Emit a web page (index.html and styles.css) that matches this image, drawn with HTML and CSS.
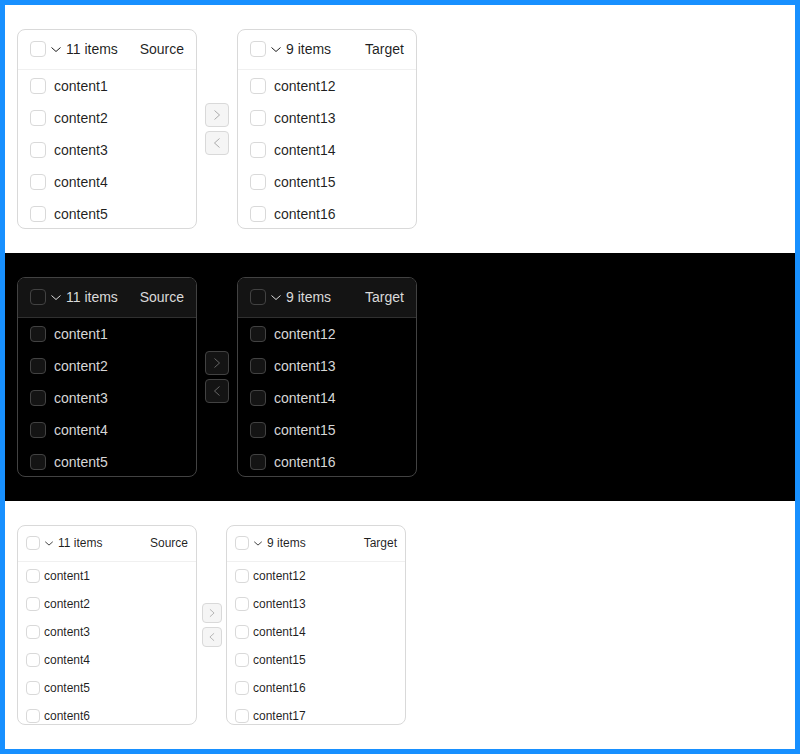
FILE: index.html
```html
<!DOCTYPE html>
<html lang="en">
<head>
<meta charset="utf-8">
<title>Transfer</title>
<link rel="stylesheet" href="styles.css">
</head>
<body>
<div class="frame">
  <section class="demo light">
    <div class="transfer">
      <div class="list">
        <div class="list-header">
          <span class="cb"></span>
          <svg class="down" viewBox="0 0 12 12"><polyline points="1.5,4.5 6,8.5 10.5,4.5"/></svg>
          <span class="count">11 items</span>
          <span class="title">Source</span>
        </div>
        <ul class="list-body">
          <li class="item"><span class="cb"></span><span>content1</span></li>
          <li class="item"><span class="cb"></span><span>content2</span></li>
          <li class="item"><span class="cb"></span><span>content3</span></li>
          <li class="item"><span class="cb"></span><span>content4</span></li>
          <li class="item"><span class="cb"></span><span>content5</span></li>
        </ul>
      </div>
      <div class="ops">
        <button class="op" type="button"><svg class="arrow" viewBox="0 0 12 12"><polyline points="3.5,1.5 8.5,6 3.5,10.5"/></svg></button>
        <button class="op" type="button"><svg class="arrow" viewBox="0 0 12 12"><polyline points="8.5,1.5 3.5,6 8.5,10.5"/></svg></button>
      </div>
      <div class="list">
        <div class="list-header">
          <span class="cb"></span>
          <svg class="down" viewBox="0 0 12 12"><polyline points="1.5,4.5 6,8.5 10.5,4.5"/></svg>
          <span class="count">9 items</span>
          <span class="title">Target</span>
        </div>
        <ul class="list-body">
          <li class="item"><span class="cb"></span><span>content12</span></li>
          <li class="item"><span class="cb"></span><span>content13</span></li>
          <li class="item"><span class="cb"></span><span>content14</span></li>
          <li class="item"><span class="cb"></span><span>content15</span></li>
          <li class="item"><span class="cb"></span><span>content16</span></li>
        </ul>
      </div>
    </div>
  </section>

  <section class="demo dark">
    <div class="transfer">
      <div class="list">
        <div class="list-header">
          <span class="cb"></span>
          <svg class="down" viewBox="0 0 12 12"><polyline points="1.5,4.5 6,8.5 10.5,4.5"/></svg>
          <span class="count">11 items</span>
          <span class="title">Source</span>
        </div>
        <ul class="list-body">
          <li class="item"><span class="cb"></span><span>content1</span></li>
          <li class="item"><span class="cb"></span><span>content2</span></li>
          <li class="item"><span class="cb"></span><span>content3</span></li>
          <li class="item"><span class="cb"></span><span>content4</span></li>
          <li class="item"><span class="cb"></span><span>content5</span></li>
        </ul>
      </div>
      <div class="ops">
        <button class="op" type="button"><svg class="arrow" viewBox="0 0 12 12"><polyline points="3.5,1.5 8.5,6 3.5,10.5"/></svg></button>
        <button class="op" type="button"><svg class="arrow" viewBox="0 0 12 12"><polyline points="8.5,1.5 3.5,6 8.5,10.5"/></svg></button>
      </div>
      <div class="list">
        <div class="list-header">
          <span class="cb"></span>
          <svg class="down" viewBox="0 0 12 12"><polyline points="1.5,4.5 6,8.5 10.5,4.5"/></svg>
          <span class="count">9 items</span>
          <span class="title">Target</span>
        </div>
        <ul class="list-body">
          <li class="item"><span class="cb"></span><span>content12</span></li>
          <li class="item"><span class="cb"></span><span>content13</span></li>
          <li class="item"><span class="cb"></span><span>content14</span></li>
          <li class="item"><span class="cb"></span><span>content15</span></li>
          <li class="item"><span class="cb"></span><span>content16</span></li>
        </ul>
      </div>
    </div>
  </section>

  <section class="demo light sm">
    <div class="transfer">
      <div class="list">
        <div class="list-header">
          <span class="cb"></span>
          <svg class="down" viewBox="0 0 12 12"><polyline points="1.5,4.5 6,8.5 10.5,4.5"/></svg>
          <span class="count">11 items</span>
          <span class="title">Source</span>
        </div>
        <ul class="list-body">
          <li class="item"><span class="cb"></span><span>content1</span></li>
          <li class="item"><span class="cb"></span><span>content2</span></li>
          <li class="item"><span class="cb"></span><span>content3</span></li>
          <li class="item"><span class="cb"></span><span>content4</span></li>
          <li class="item"><span class="cb"></span><span>content5</span></li>
          <li class="item"><span class="cb"></span><span>content6</span></li>
        </ul>
      </div>
      <div class="ops">
        <button class="op" type="button"><svg class="arrow" viewBox="0 0 12 12"><polyline points="3.5,1.5 8.5,6 3.5,10.5"/></svg></button>
        <button class="op" type="button"><svg class="arrow" viewBox="0 0 12 12"><polyline points="8.5,1.5 3.5,6 8.5,10.5"/></svg></button>
      </div>
      <div class="list">
        <div class="list-header">
          <span class="cb"></span>
          <svg class="down" viewBox="0 0 12 12"><polyline points="1.5,4.5 6,8.5 10.5,4.5"/></svg>
          <span class="count">9 items</span>
          <span class="title">Target</span>
        </div>
        <ul class="list-body">
          <li class="item"><span class="cb"></span><span>content12</span></li>
          <li class="item"><span class="cb"></span><span>content13</span></li>
          <li class="item"><span class="cb"></span><span>content14</span></li>
          <li class="item"><span class="cb"></span><span>content15</span></li>
          <li class="item"><span class="cb"></span><span>content16</span></li>
          <li class="item"><span class="cb"></span><span>content17</span></li>
        </ul>
      </div>
    </div>
  </section>
</div>
</body>
</html>
```

FILE: styles.css
```css
html, body {
  margin: 0;
  padding: 0;
}

body {
  font-family: "Liberation Sans", Arial, sans-serif;
  background: #fff;
}

.frame {
  height: 744px;
  border: 5px solid #1890ff;
  background: #fff;
}

.demo {
  height: 248px;
  box-sizing: border-box;
  padding: 24px 12px;
  display: flex;
  align-items: flex-start;
}

.dark {
  background: #000;
}

.transfer {
  display: flex;
  align-items: center;
}

.list {
  width: 180px;
  height: 200px;
  box-sizing: border-box;
  border: 1px solid #d9d9d9;
  border-radius: 8px;
  display: flex;
  flex-direction: column;
  overflow: hidden;
  background: #fff;
  color: rgba(0, 0, 0, 0.88);
}

.list-header {
  flex: none;
  height: 40px;
  box-sizing: border-box;
  padding: 0 12px 1px;
  border-bottom: 1px solid #f0f0f0;
  display: flex;
  align-items: center;
  gap: 4px;
  font-size: 14px;
  line-height: 22px;
  white-space: nowrap;
}

.down {
  width: 12px;
  height: 12px;
  flex: none;
  fill: none;
  stroke: currentColor;
  stroke-width: 1;
}

.title {
  flex: auto;
  text-align: right;
}

.list-body {
  flex: auto;
  margin: 0;
  padding: 0;
  list-style: none;
  overflow: hidden;
}

.item {
  height: 32px;
  box-sizing: border-box;
  padding: 0 12px;
  display: flex;
  align-items: center;
  gap: 8px;
  font-size: 14px;
  line-height: 22px;
}

.cb {
  flex: none;
  width: 16px;
  height: 16px;
  box-sizing: border-box;
  border: 1px solid #d9d9d9;
  border-radius: 4px;
  background: #fff;
}

.ops {
  display: flex;
  flex-direction: column;
  gap: 4px;
  margin: 0 8px;
}

.op {
  width: 24px;
  height: 24px;
  padding: 0;
  box-sizing: border-box;
  border: 1px solid #d9d9d9;
  border-radius: 4px;
  background: #f5f5f5;
  display: flex;
  align-items: center;
  justify-content: center;
  color: rgba(0, 0, 0, 0.3);
}

.arrow {
  width: 12px;
  height: 12px;
  fill: none;
  stroke: currentColor;
  stroke-width: 1;
}

/* dark theme */
.dark .list {
  background: #000;
  border-color: #424242;
  color: rgba(255, 255, 255, 0.85);
}

.dark .list-header {
  background: #141414;
  border-bottom-color: #303030;
}

.dark .cb {
  background: #141414;
  border-color: #424242;
}

.dark .op {
  background: #141414;
  border-color: #424242;
  color: rgba(255, 255, 255, 0.35);
}

/* small size */
.sm .list-header {
  height: 36px;
  padding: 0 8px 1px;
  font-size: 12px;
  line-height: 20px;
}

.sm .down {
  width: 10px;
  height: 10px;
}

.sm .item {
  height: 28px;
  padding: 0 8px;
  gap: 4px;
  font-size: 12px;
  line-height: 20px;
}

.sm .cb {
  width: 14px;
  height: 14px;
}

.sm .ops {
  margin: 0 4px 0 5px;
}

.sm .op {
  width: 20px;
  height: 20px;
}

.sm .arrow {
  width: 10px;
  height: 10px;
}
```
